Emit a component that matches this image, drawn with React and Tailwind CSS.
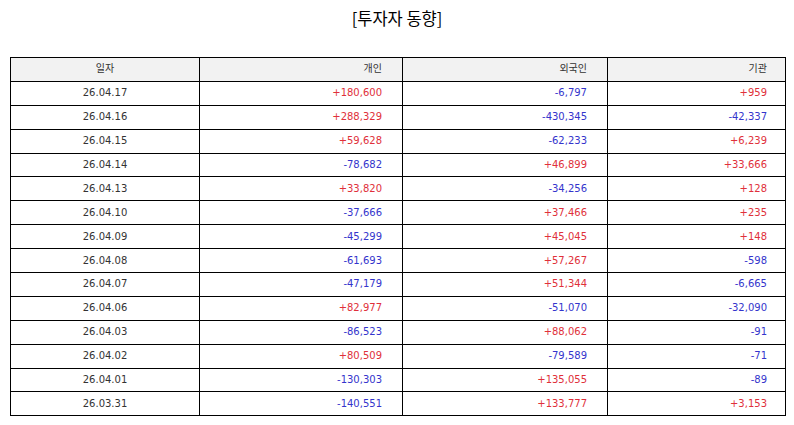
const ROWS = [
  ['26.04.17', '+180,600', '-6,797', '+959'],
  ['26.04.16', '+288,329', '-430,345', '-42,337'],
  ['26.04.15', '+59,628', '-62,233', '+6,239'],
  ['26.04.14', '-78,682', '+46,899', '+33,666'],
  ['26.04.13', '+33,820', '-34,256', '+128'],
  ['26.04.10', '-37,666', '+37,466', '+235'],
  ['26.04.09', '-45,299', '+45,045', '+148'],
  ['26.04.08', '-61,693', '+57,267', '-598'],
  ['26.04.07', '-47,179', '+51,344', '-6,665'],
  ['26.04.06', '+82,977', '-51,070', '-32,090'],
  ['26.04.03', '-86,523', '+88,062', '-91'],
  ['26.04.02', '+80,509', '-79,589', '-71'],
  ['26.04.01', '-130,303', '+135,055', '-89'],
  ['26.03.31', '-140,551', '+133,777', '+3,153'],
]

const HEAD = ['일자', '개인', '외국인', '기관']
const PAD = ['', 'pr-[20px]', 'pr-[20px]', 'pr-[18px]']

const tone = (v) => (v.startsWith('+') ? 'text-[#e0303a]' : 'text-[#3434cc]')

export default function App() {
  return (
    <div className="w-[794px] h-[425px] bg-white font-['DejaVu_Sans','Noto_Sans_CJK_KR',sans-serif] text-[#333]">
      <h1 className="pt-[6px] text-center text-[16.5px] leading-[24px] text-black font-['Noto_Sans_CJK_KR',sans-serif]">
        [투자자 동향]
      </h1>

      <div className="pl-[10px] pt-[27px]">
        <table className="w-[775px] border-collapse table-fixed text-[10px]">
          <colgroup>
            <col className="w-[189px]" />
            <col className="w-[203px]" />
            <col className="w-[205px]" />
            <col className="w-[178px]" />
          </colgroup>
          <thead>
            <tr className="h-[23.9px] bg-[#f2f2f2]">
              {HEAD.map((h, i) => (
                <th
                  key={h}
                  className={`border border-black p-0 font-normal leading-none ${i === 0 ? 'text-center' : `text-right ${PAD[i]}`}`}
                >
                  {h}
                </th>
              ))}
            </tr>
          </thead>
          <tbody>
            {ROWS.map((r) => (
              <tr key={r[0]} className="h-[23.9px]">
                {r.map((v, i) => (
                  <td
                    key={i}
                    className={`border border-black p-0 leading-none ${i === 0 ? 'text-center' : `text-right ${PAD[i]} ${tone(v)}`}`}
                  >
                    {v}
                  </td>
                ))}
              </tr>
            ))}
          </tbody>
        </table>
      </div>
    </div>
  )
}
